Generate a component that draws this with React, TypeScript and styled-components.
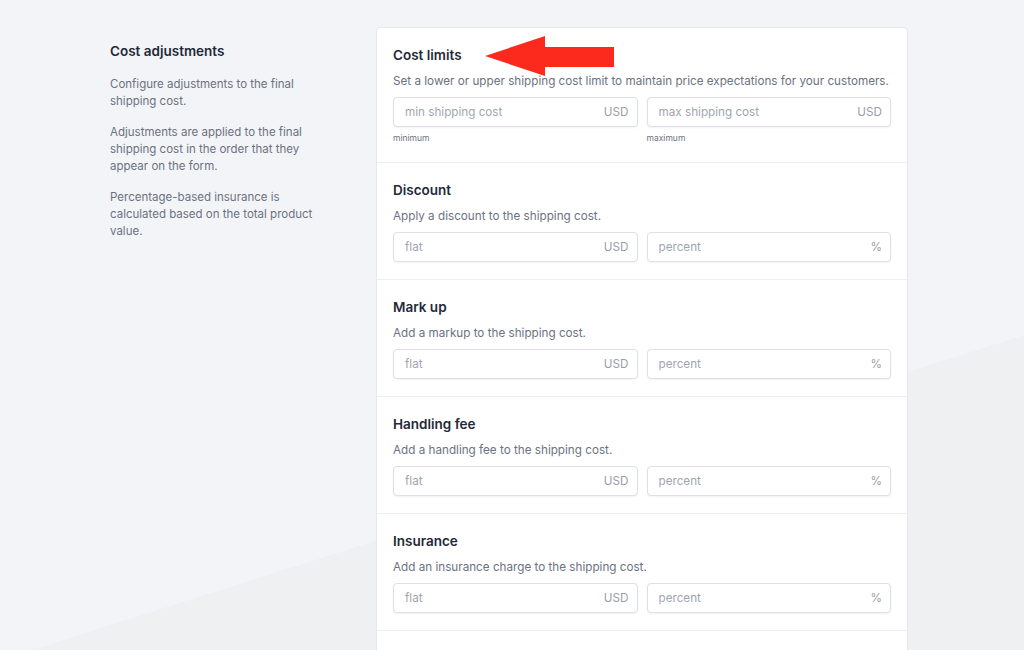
import { FC } from 'react';
import styled, { createGlobalStyle } from 'styled-components';

const GlobalStyle = createGlobalStyle`
  html, body {
    margin: 0;
    padding: 0;
    overflow: hidden;
  }
  body {
    font-family: Inter, "Noto Sans", "Liberation Sans", sans-serif;
    -webkit-font-smoothing: antialiased;
  }
  * {
    box-sizing: border-box;
  }
`;

const Page = styled.div`
  height: 100vh;
  overflow: hidden;
  padding-top: 27px;
  background: linear-gradient(162.4deg, #f3f4f7 0%, #f3f4f7 67.7%, #eff0f2 67.7%, #eff0f2 100%);
`;

const Layout = styled.div`
  width: 798px;
  margin-left: 110px;
  display: grid;
  grid-template-columns: 266px 532px;
  align-items: start;
`;

const Aside = styled.div`
  padding-top: 14px;
  max-width: 212px;
`;

const AsideTitle = styled.h2`
  margin: 0 0 15px;
  font-size: 13.5px;
  line-height: 20px;
  font-weight: 600;
  color: #1f2937;
`;

const AsideText = styled.p`
  margin: 0 0 14px;
  font-size: 11.5px;
  line-height: 17px;
  color: #6b7280;
`;

const Card = styled.div`
  position: relative;
  background: #ffffff;
  border: 1px solid #e6e8eb;
  border-radius: 4px;
`;

const Section = styled.section<{ $empty?: boolean }>`
  padding: 17px 16px 17px;
  min-height: ${(p) => (p.$empty ? '60px' : 'auto')};
  border-bottom: 1px solid #eceef0;
`;

const SectionTitle = styled.h3`
  margin: 0;
  font-size: 13.5px;
  line-height: 20px;
  font-weight: 600;
  color: #1f2937;
`;

const SectionText = styled.p`
  margin: 7px 0 7px;
  font-size: 11.7px;
  line-height: 18px;
  color: #6b7280;
  white-space: nowrap;
`;

const Fields = styled.div`
  display: grid;
  grid-template-columns: 1fr 1fr;
  gap: 9px;
`;

const Field = styled.div`
  display: flex;
  flex-direction: column;
`;

const InputBox = styled.label`
  height: 30px;
  display: flex;
  align-items: center;
  padding: 0 8px 0 11px;
  border: 1px solid #dde0e4;
  border-radius: 4px;
  box-shadow: 0 1px 2px rgba(17, 24, 39, 0.05);
  background: #fff;
`;

const Input = styled.input`
  flex: 1;
  min-width: 0;
  border: 0;
  outline: none;
  padding: 0;
  background: transparent;
  font-family: inherit;
  font-size: 11.7px;
  color: #374151;

  &::placeholder {
    color: #a0a6b0;
  }
`;

const Suffix = styled.span`
  font-size: 11.7px;
  color: #9aa0a9;
`;

const Hint = styled.span`
  margin-top: 4px;
  font-size: 8.5px;
  line-height: 14px;
  color: #6b7280;
`;

const Arrow = styled.svg`
  position: absolute;
  left: 108px;
  top: 7px;
  pointer-events: none;
`;

type FieldDef = { placeholder: string; suffix: string; hint?: string };
type SectionDef = { title: string; text: string; fields: FieldDef[] };

const flatPercent: FieldDef[] = [
  { placeholder: 'flat', suffix: 'USD' },
  { placeholder: 'percent', suffix: '%' },
];

const sections: SectionDef[] = [
  {
    title: 'Cost limits',
    text: 'Set a lower or upper shipping cost limit to maintain price expectations for your customers.',
    fields: [
      { placeholder: 'min shipping cost', suffix: 'USD', hint: 'minimum' },
      { placeholder: 'max shipping cost', suffix: 'USD', hint: 'maximum' },
    ],
  },
  { title: 'Discount', text: 'Apply a discount to the shipping cost.', fields: flatPercent },
  { title: 'Mark up', text: 'Add a markup to the shipping cost.', fields: flatPercent },
  { title: 'Handling fee', text: 'Add a handling fee to the shipping cost.', fields: flatPercent },
  { title: 'Insurance', text: 'Add an insurance charge to the shipping cost.', fields: flatPercent },
];

const App: FC = () => (
  <Page>
    <GlobalStyle />
    <Layout>
      <Aside>
        <AsideTitle>Cost adjustments</AsideTitle>
        <AsideText>Configure adjustments to the final shipping cost.</AsideText>
        <AsideText>
          Adjustments are applied to the final shipping cost in the order that they appear on the form.
        </AsideText>
        <AsideText>Percentage-based insurance is calculated based on the total product value.</AsideText>
      </Aside>
      <Card>
        {sections.map((s) => (
          <Section key={s.title}>
            <SectionTitle>{s.title}</SectionTitle>
            <SectionText>{s.text}</SectionText>
            <Fields>
              {s.fields.map((f) => (
                <Field key={f.placeholder}>
                  <InputBox>
                    <Input placeholder={f.placeholder} />
                    <Suffix>{f.suffix}</Suffix>
                  </InputBox>
                  {f.hint && <Hint>{f.hint}</Hint>}
                </Field>
              ))}
            </Fields>
          </Section>
        ))}
        <Section $empty />
        <Arrow width="130" height="42" viewBox="0 0 130 42">
          <polygon points="0,21 60,1 60,12 129,12 129,32 60,32 60,41" fill="#fb2a1c" />
        </Arrow>
      </Card>
    </Layout>
  </Page>
);

export default App;
